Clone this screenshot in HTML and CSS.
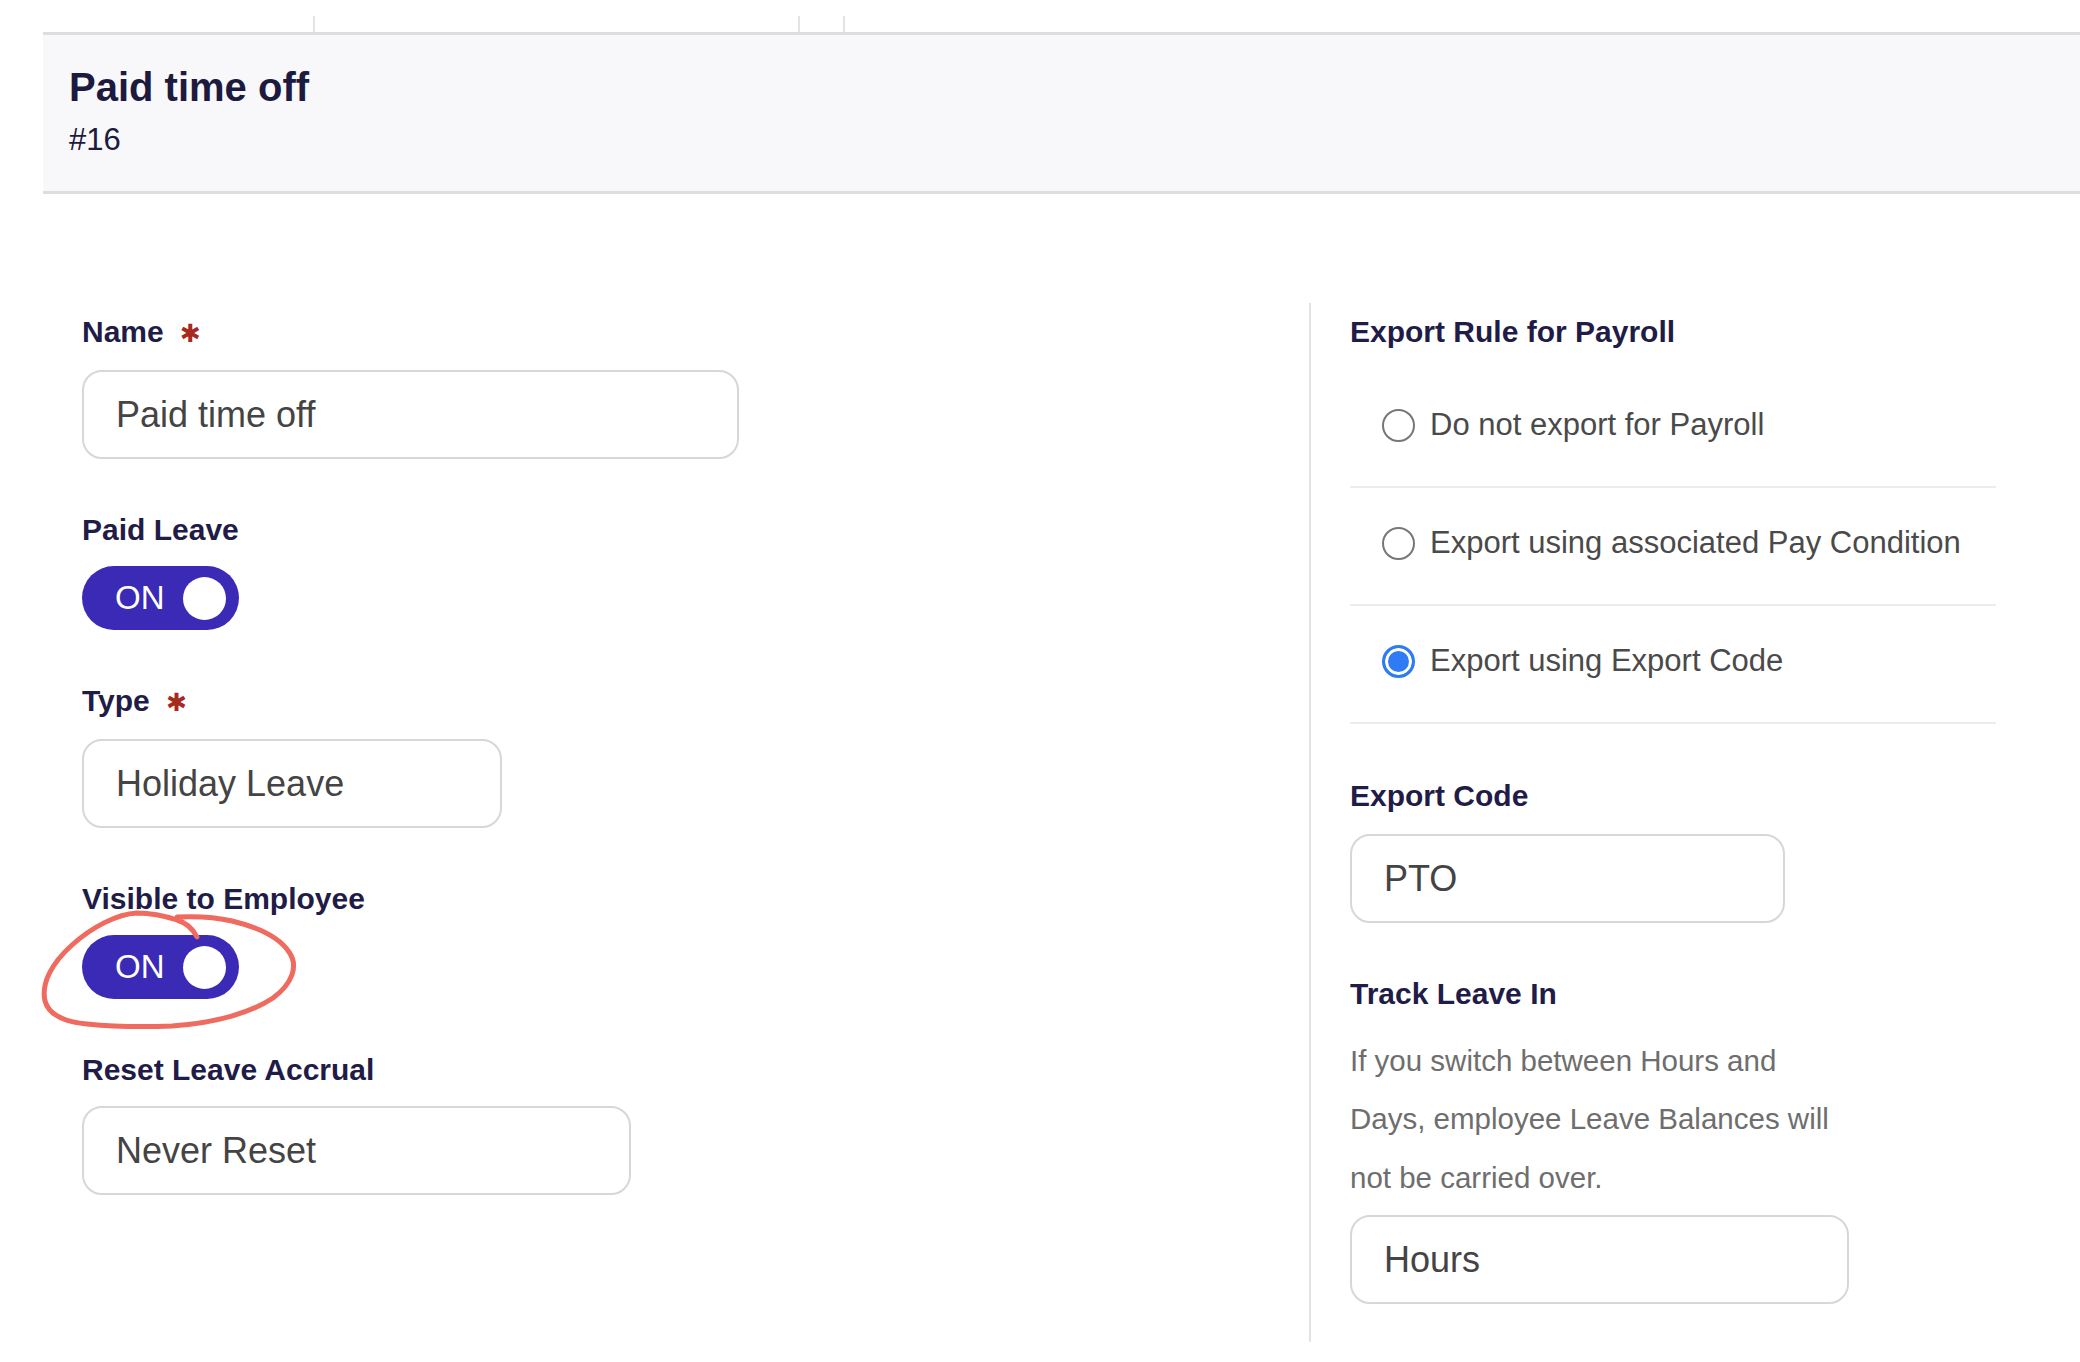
FILE: index.html
```html
<!DOCTYPE html>
<html lang="en">
<head>
  <meta charset="UTF-8" />
  <meta name="viewport" content="width=device-width, initial-scale=1.0"/>
  <title>Paid time off</title>
  <link rel="stylesheet" href="styles.css">
</head>
<body>

  <div class="tabs">
    <span class="tab tab-1"></span>
    <span class="tab tab-2"></span>
    <span class="tab tab-3"></span>
  </div>

  <header class="page-head">
    <h1>Paid time off</h1>
    <div class="record-id">#16</div>
  </header>

  <main class="form">
    <section class="col col-left">
      <div class="field">
        <label class="label">Name <span class="req">&#10033;</span></label>
        <div class="input input-name">Paid time off</div>
      </div>

      <div class="field">
        <label class="label">Paid Leave</label>
        <div class="toggle">
          <span class="toggle-text">ON</span>
          <span class="knob"></span>
        </div>
      </div>

      <div class="field">
        <label class="label">Type <span class="req">&#10033;</span></label>
        <div class="input input-type">Holiday Leave</div>
      </div>

      <div class="field">
        <label class="label">Visible to Employee</label>
        <div class="toggle-wrap">
          <div class="toggle">
            <span class="toggle-text">ON</span>
            <span class="knob"></span>
          </div>
          <!-- hand drawn highlight -->
          <svg class="scribble" width="262" height="128" viewBox="0 0 262 128">
            <path d="M160 32 C156 24 150 18 140 15 C125 10 110 8 100 8 C80 9 55 22 35 40 C15 58 4 78 8 96 C12 110 28 117 50 119 C80 122 110 122 135 121 C180 118 215 107 236 93 C255 79 262 61 252 47 C242 32 220 22 195 16 C178 12 160 11 140 12" />
          </svg>
        </div>
      </div>

      <div class="field">
        <label class="label">Reset Leave Accrual</label>
        <div class="input input-reset">Never Reset</div>
      </div>
    </section>

    <section class="col col-right">
      <div class="label label-rule">Export Rule for Payroll</div>
      <div class="radio-list">
        <div class="radio-row">
          <span class="radio"></span>
          <span class="radio-text">Do not export for Payroll</span>
        </div>
        <div class="radio-row">
          <span class="radio"></span>
          <span class="radio-text">Export using associated Pay Condition</span>
        </div>
        <div class="radio-row">
          <span class="radio checked"></span>
          <span class="radio-text">Export using Export Code</span>
        </div>
      </div>

      <div class="field field-code">
        <label class="label">Export Code</label>
        <div class="input input-code">PTO</div>
      </div>

      <div class="field field-track">
        <label class="label">Track Leave In</label>
        <p class="help">If you switch between Hours and Days, employee Leave Balances will not be carried over.</p>
        <div class="input input-hours">Hours</div>
      </div>
    </section>
  </main>

</body>
</html>
```

FILE: styles.css
```css
body {
  margin: 0;
  padding: 0;
  font-family: 'Liberation Sans', Arial, sans-serif;
  background: #fff;
  color: #1f1c47;
}

.tabs {
  display: flex;
  height: 16px;
  padding-top: 16px;
}

.tab {
  border-right: 2px solid #e4e4e7;
}

.tab-1 { width: 313px; }
.tab-2 { width: 483px; }
.tab-3 { width: 43px; }

.page-head {
  margin-left: 43px;
  background: #f8f8fa;
  border-top: 3px solid #dcdce1;
  border-bottom: 3px solid #dcdce1;
  padding: 28px 26px 33px;
}

.page-head h1 {
  margin: 0;
  font-size: 40px;
  line-height: 48px;
  font-weight: bold;
  color: #1d1a40;
}

.record-id {
  margin-top: 10px;
  font-size: 31px;
  line-height: 37px;
  color: #1d1a40;
}

.form {
  display: flex;
  margin-left: 43px;
  padding-top: 109px;
}

.col {
  box-sizing: border-box;
  padding-top: 11px;
}

.col-left {
  width: 1266px;
  padding-left: 39px;
}

.col-right {
  flex: 1;
  border-left: 2px solid #e3e3e6;
  padding-left: 39px;
  padding-bottom: 38px;
}

.field {
  margin-bottom: 53px;
}

.label {
  display: block;
  font-size: 30px;
  line-height: 36px;
  font-weight: bold;
  color: #1f1c47;
  margin-bottom: 18px;
}

.label-rule {
  margin-bottom: 21px;
}

.req {
  font-family: 'DejaVu Sans', sans-serif;
  font-size: 25px;
  font-weight: bold;
  color: #a62a1e;
  margin-left: 8px;
}

.input {
  box-sizing: border-box;
  height: 89px;
  border: 2px solid #d7d7db;
  border-radius: 20px;
  padding-left: 32px;
  display: flex;
  align-items: center;
  font-size: 36px;
  color: #444;
  background: #fff;
}

.input-name { width: 657px; }
.input-type { width: 420px; }
.input-reset { width: 549px; }
.input-code { width: 435px; }
.input-hours { width: 499px; }

.toggle {
  box-sizing: border-box;
  width: 157px;
  height: 64px;
  border-radius: 32px;
  background: #3a2ab5;
  display: flex;
  align-items: center;
  justify-content: space-between;
  padding: 0 13px 0 33px;
}

.toggle-text {
  color: #fff;
  font-size: 33px;
}

.knob {
  width: 43px;
  height: 43px;
  border-radius: 50%;
  background: #fff;
}

.toggle-wrap {
  position: relative;
  width: 157px;
}

.scribble {
  position: absolute;
  left: -45px;
  top: -30px;
  fill: none;
  stroke: #ef6a5f;
  stroke-width: 5;
  stroke-linecap: round;
}

.radio-list {
  width: 646px;
  margin-top: -1px;
}

.radio-row {
  box-sizing: border-box;
  height: 118px;
  padding: 0 0 6px 32px;
  border-bottom: 2px solid #ececee;
  display: flex;
  align-items: center;
}

.radio {
  box-sizing: border-box;
  width: 33px;
  height: 33px;
  border-radius: 50%;
  border: 2px solid #777;
  background: #fff;
  margin-right: 15px;
}

.radio.checked {
  border: 3px solid #2f7bf5;
  background: #2f7bf5;
  box-shadow: inset 0 0 0 3px #fff;
}

.radio-text {
  font-size: 31px;
  color: #4a4a4a;
}

.field-code {
  margin-top: 54px;
  margin-bottom: 53px;
}

.field-code .label {
  margin-bottom: 20px;
}

.field-track {
  margin-bottom: 0;
}

.field-track .label {
  margin-bottom: 0;
}

.help {
  margin: 20px 0 8px;
  width: 495px;
  font-size: 29.5px;
  line-height: 58.4px;
  color: #6e6e6e;
}
```
